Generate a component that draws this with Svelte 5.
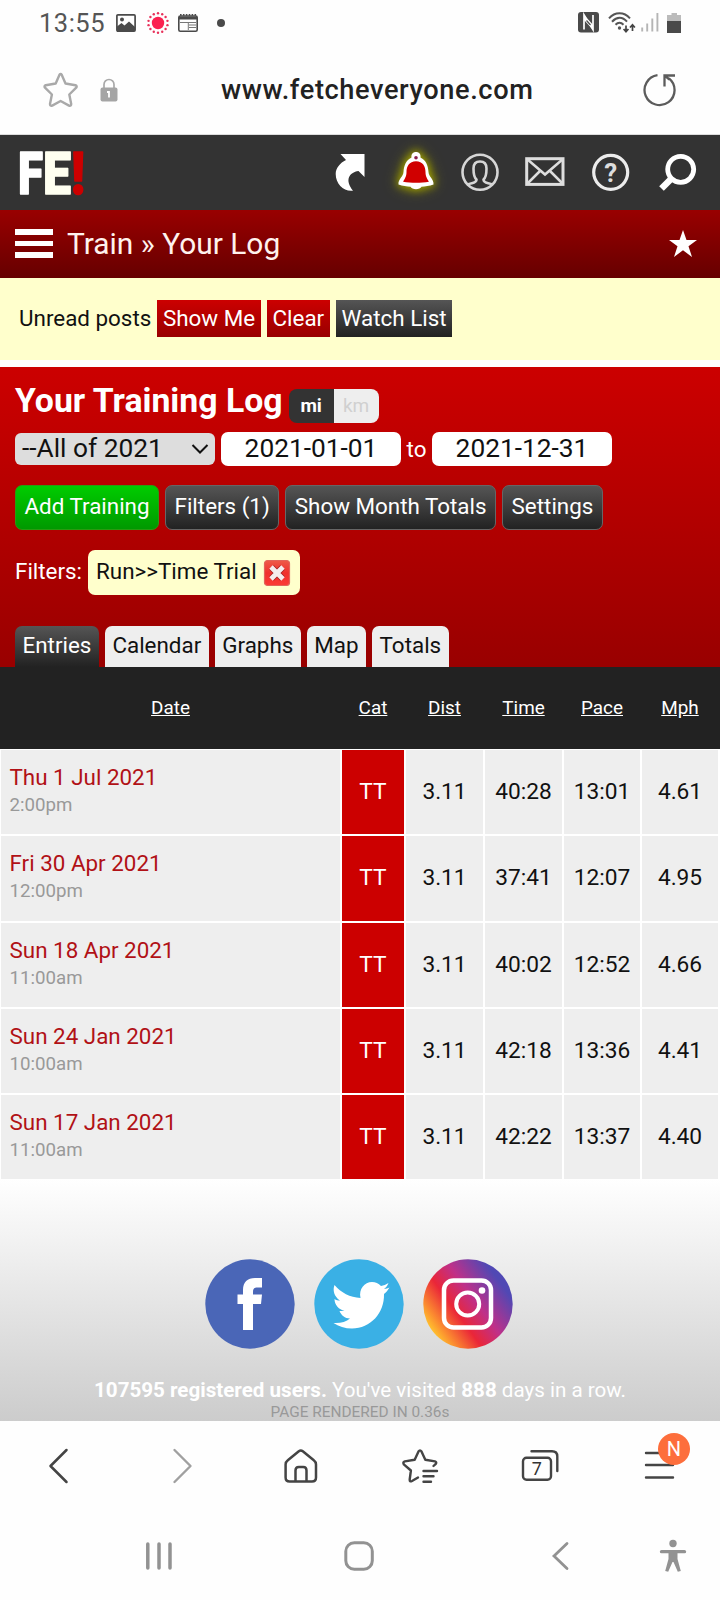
<script>
  const actions = ['Filters (1)', 'Show Month Totals', 'Settings'];
  const tabs = ['Calendar', 'Graphs', 'Map', 'Totals'];
  const columns = ['Date', 'Cat', 'Dist', 'Time', 'Pace', 'Mph'];

  const entries = [
    { date: 'Thu 1 Jul 2021', at: '2:00pm', cat: 'TT', dist: '3.11', time: '40:28', pace: '13:01', mph: '4.61' },
    { date: 'Fri 30 Apr 2021', at: '12:00pm', cat: 'TT', dist: '3.11', time: '37:41', pace: '12:07', mph: '4.95' },
    { date: 'Sun 18 Apr 2021', at: '11:00am', cat: 'TT', dist: '3.11', time: '40:02', pace: '12:52', mph: '4.66' },
    { date: 'Sun 24 Jan 2021', at: '10:00am', cat: 'TT', dist: '3.11', time: '42:18', pace: '13:36', mph: '4.41' },
    { date: 'Sun 17 Jan 2021', at: '11:00am', cat: 'TT', dist: '3.11', time: '42:22', pace: '13:37', mph: '4.40' }
  ];

  const sunDots = Array.from({ length: 14 }, (_, i) => {
    const angle = (i * 2 * Math.PI) / 14;
    return { x: 11 + 9.7 * Math.sin(angle), y: 11 - 9.7 * Math.cos(angle) };
  });
</script>

<div class="screen">
  <div class="status">
    <span class="clock">13:55</span>
    <svg class="photo" width="20" height="18" viewBox="0 0 20 18">
      <rect x="0.9" y="0.9" width="18.2" height="16.2" rx="1" fill="none" stroke="#4a4a4a" stroke-width="1.7" />
      <circle cx="6" cy="5.5" r="2" fill="#4a4a4a" />
      <path d="M1 17v-4.5l4.5-3.5 3 2.5L13 7.5l6 5.5v4z" fill="#4a4a4a" />
    </svg>
    <svg class="sun" width="22" height="22" viewBox="0 0 22 22">
      <circle cx="11" cy="11" r="6.2" fill="#fb2150" />
      {#each sunDots as dot}
        <circle cx={dot.x} cy={dot.y} r="1.2" fill="#e8305a" />
      {/each}
    </svg>
    <svg class="news" width="20" height="18" viewBox="0 0 20 18">
      <rect x="0.8" y="2" width="18.4" height="15.2" rx="1.5" fill="none" stroke="#4a4a4a" stroke-width="1.6" />
      <path d="M1 2.5h18v3H1z" fill="#4a4a4a" />
      <path d="M2 .9h16.5" stroke="#4a4a4a" stroke-width="1.8" stroke-dasharray="1.6 1.3" />
      <path d="M2 8.5h16M11 11h7M11 13.5h7" stroke="#777" stroke-width="1" />
      <path d="M10.3 8v8" stroke="#777" stroke-width="1" />
    </svg>
    <span class="more"></span>
    <svg class="nfc" width="22" height="21" viewBox="0 0 22 21">
      <rect x="0" y="0" width="21" height="20.5" rx="3" fill="#4a4a4a" />
      <path d="M6 17.5V2.8L15 17.7V3" fill="none" stroke="#fff" stroke-width="1.7" />
      <path d="M6 3v5l9 9.7v-5z" fill="#fff" />
      <path d="M8.5 8.5l4 4.5" stroke="#4a4a4a" stroke-width="1.2" />
    </svg>
    <svg class="wifi" width="28" height="22" viewBox="0 0 28 22">
      <g fill="none" stroke="#555" stroke-width="2">
        <path d="M1 6.3C7-.5 16-.5 22 6.3" />
        <path d="M4 9.7C9 4.5 14.5 4.5 19 9.7" />
        <path d="M7.5 12.7C10 10 13 10 15.5 12.7" />
      </g>
      <circle cx="11.5" cy="16" r="1.7" fill="#555" />
      <path d="M18 13.5v6M15.6 17l2.4 2.7 2.4-2.7M24.5 19v-6M22 15.5l2.5-2.7 2.4 2.7" fill="none" stroke="#444" stroke-width="1.7" />
    </svg>
    <svg class="signal" width="18" height="19" viewBox="0 0 18 19">
      <path d="M1.2 14.5V18.5M6.2 10.5V18.5M11.3 5.5V18.5M16.4 0V18.5" stroke="#b5b5b5" stroke-width="1.9" />
    </svg>
    <svg width="14" height="20" viewBox="0 0 14 20">
      <path d="M4.5 0h5.5v2h4v6H0V2h4.5z" fill="#bbb" />
      <path d="M0 8h14v12H0z" fill="#4a4a4a" />
    </svg>
  </div>

  <div class="address">
    <svg class="fav" width="38" height="38" viewBox="0 0 38 38">
      <path d="M17.5 3.7Q18.6 2 19.7 3.7L23.5 12.5L33.5 14.2Q35.5 15 34.2 16.7L27.3 23.5L29.2 33Q29.2 35.3 27 34.6L18.6 30L10.2 34.6Q8 35.3 8 33L9.9 23.5L3 16.7Q1.7 15 3.7 14.2L13.7 12.5Z" fill="none" stroke="#a9a9a9" stroke-width="2.4" stroke-linejoin="round" />
    </svg>
    <svg class="lock" width="18" height="24" viewBox="0 0 18 24">
      <path d="M4 10V6.5a5 5 0 0 1 10 0V10" fill="none" stroke="#a9a9a9" stroke-width="1.7" />
      <rect x="0.5" y="9.5" width="17" height="14" rx="2" fill="#a5a5a5" />
      <path d="M7 14h2v5.5" fill="none" stroke="#fff" stroke-width="1.8" />
    </svg>
    <span class="url">www.fetcheveryone.com</span>
    <svg class="reload" width="34" height="34" viewBox="0 0 34 34">
      <path d="M14.5 2.2A15 15 0 1 0 26 5.4M21.5 13.5V2.5h10.5M21.5 2.5l5 4" fill="none" stroke="#5c5c5c" stroke-width="2.3" />
    </svg>
  </div>

  <header class="site">
    <div class="logo">
      <svg width="25" height="75" viewBox="0 0 25 75"><text x="0" y="59" textLength="25" lengthAdjust="spacingAndGlyphs" fill="#fff" stroke="#fff">F</text></svg>
      <svg width="28" height="75" viewBox="0 0 28 75"><text x="0" y="59" textLength="28" lengthAdjust="spacingAndGlyphs" fill="#fffff0" stroke="#fffff0">E</text></svg>
      <svg width="15" height="75" viewBox="0 0 15 75"><text x="0" y="59" textLength="14" lengthAdjust="spacingAndGlyphs" fill="#c00" stroke="#c00">!</text></svg>
    </div>
    <nav class="tools">
      <svg width="65" height="75" viewBox="0 0 65 75">
        <path d="M22.5 19H46.5V42L40.5 36C31 37.5 26.5 45 35 55.7C26 57 17.7 49 17.7 39C17.7 33 22 28 28 25Z" fill="#fff" />
      </svg>
      <svg class="bell" width="65" height="75" viewBox="0 0 65 75">
        <path d="M33 17c3 0 5 2.2 4.5 5.5C43 25.5 45 30 45.5 37c.3 5 5.5 7 5 12.5-4 1.5-8.5 2-12 2.300-1.500 3.200-9.500 3.200-11 0-3.500-.3-8-.8-12-2.300-.5-5.500 4.700-7.500 5-12.500.5-7 2.500-11.500 8-14.500C28 19.200 30 17 33 17z" fill="#fff" />
        <path d="M33 26.3c6.800 0 9.500 5.200 9.500 10.700 0 4.500 1.700 6.500 3.400 9.700-8 1.500-17.800 1.500-25.800 0C21.800 43.500 23.500 41.500 23.500 37c0-5.500 2.700-10.700 9.500-10.700z" fill="#d00000" />
        <circle cx="33" cy="22.700" r="1.800" fill="#8a1f4c" />
      </svg>
      <svg width="65" height="75" viewBox="0 0 65 75">
        <g fill="none" stroke="#d6d6d6" stroke-width="2.6">
          <circle cx="32" cy="37.3" r="17.5" />
          <path d="M19.5 49.5C24 47.5 28.5 48.5 28.5 44.5C26 42.5 25.5 38 25.5 33.5C25.5 28.5 28 26.5 32 26.5S38.5 28.5 38.5 33.5C38.5 38 38 42.5 35.5 44.5C35.5 48.5 40 47.5 44.5 49.5" />
        </g>
      </svg>
      <svg width="65" height="75" viewBox="0 0 65 75">
        <g fill="none" stroke="#dedede">
          <rect x="13.7" y="23.7" width="36.3" height="25.7" stroke-width="3" />
          <path d="M14 24l18 15.5L50 24M14 49l13-13M50 49L37 36" stroke-width="2.5" />
        </g>
      </svg>
      <svg width="65" height="75" viewBox="0 0 65 75">
        <circle cx="32.7" cy="37.3" r="17" fill="none" stroke="#ececec" stroke-width="3.2" />
        <text x="32.7" y="46.5" text-anchor="middle" font-family="Roboto, sans-serif" font-weight="700" font-size="26" fill="#ddd">?</text>
      </svg>
      <svg width="65" height="75" viewBox="0 0 65 75">
        <path d="M28 44L18.5 53.5" stroke="#fff" stroke-width="6.5" />
        <circle cx="37.7" cy="34.3" r="13" fill="none" stroke="#fff" stroke-width="4.8" />
      </svg>
    </nav>
  </header>

  <div class="crumbs">
    <div class="burger"><i></i><i></i><i></i></div>
    <span class="trail">Train » Your Log</span>
    <svg width="30" height="30" viewBox="0 0 30 30">
      <path d="M15 1l3.500 10H29l-8.500 6.300L24 28l-9-6.700L6 28l3.500-10.700L1 11h10.500z" fill="#fff" />
    </svg>
  </div>

  <div class="unread">
    <span class="caption">Unread posts</span>
    <span class="flat red">Show Me</span>
    <span class="flat red">Clear</span>
    <span class="flat dark">Watch List</span>
  </div>

  <section class="log">
    <div class="title">
      <h1>Your Training Log</h1>
      <div class="units"><span class="on">mi</span><span>km</span></div>
    </div>
    <div class="range">
      <div class="select">
        <span>--All of 2021</span>
        <svg width="18" height="12" viewBox="0 0 18 12"><path d="M1.5 2L9 9.5 16.5 2" fill="none" stroke="#111" stroke-width="2" /></svg>
      </div>
      <div class="field">2021-01-01</div>
      <span class="to">to</span>
      <div class="field">2021-12-31</div>
    </div>
    <div class="actions">
      <span class="btn green">Add Training</span>
      {#each actions as label}
        <span class="btn">{label}</span>
      {/each}
    </div>
    <div class="filters">
      <span>Filters:</span>
      <div class="tag">
        <span>Run&gt;&gt;Time Trial</span>
        <svg width="28" height="28" viewBox="0 0 28 28">
          <defs>
            <linearGradient id="close" x1="0" y1="0" x2="0" y2="1">
              <stop offset="0" stop-color="#ee5a48" />
              <stop offset="0.5" stop-color="#f0302c" />
              <stop offset="1" stop-color="#fb3a34" />
            </linearGradient>
          </defs>
          <rect x="1.5" y="1.5" width="25" height="25" rx="3" fill="url(#close)" stroke="#e2645a" stroke-width="1.2" />
          <path d="M8.5 8.5l11 11M19.5 8.5l-11 11" stroke="#a82020" stroke-width="6.5" />
          <path d="M8 8l12 12M20 8L8 20" stroke="#f4ecec" stroke-width="4.8" />
        </svg>
      </div>
    </div>
    <div class="tabs">
      <span class="tab active">Entries</span>
      {#each tabs as label}
        <span class="tab">{label}</span>
      {/each}
    </div>
  </section>

  <div class="row head">
    {#each columns as column}
      <span>{column}</span>
    {/each}
  </div>
  <div class="rows">
    {#each entries as entry}
      <div class="row">
        <div class="when">
          <span class="date">{entry.date}</span>
          <span class="at">{entry.at}</span>
        </div>
        <div class="cell cat">{entry.cat}</div>
        <div class="cell">{entry.dist}</div>
        <div class="cell">{entry.time}</div>
        <div class="cell">{entry.pace}</div>
        <div class="cell">{entry.mph}</div>
      </div>
    {/each}
  </div>

  <footer>
    <div class="social">
      <svg width="90" height="90" viewBox="0 0 90 90">
        <circle cx="45" cy="45" r="44.7" fill="#4a66b7" />
        <path d="M38 71V45h-5.5v-9.5H38V31c0-8 4.5-12 12-12h7v9.5h-4.5c-3.500 0-4.500 1.500-4.500 4.500v2.500h9L56 45h-8v26z" fill="#fff" />
      </svg>
      <svg width="90" height="90" viewBox="0 0 90 90">
        <circle cx="45" cy="45" r="44.7" fill="#3ab0e5" />
        <path d="M20.5 26C27 33.5 36 38.5 46.5 39C44.5 30 50.5 23 58 23C61.5 23 64.5 24.5 67 27C69.5 26.5 72 25.5 74.5 24C73.5 27 71.5 29 70 30C72 30 74 29 75.5 28.5C74 31 72 33.5 70 35C70.5 54 56.5 69.5 38 69.5C31 69.5 24.5 67.5 19.5 64C26 64.5 32 63 36 59.5C31 59.5 27 56 25.5 52H30.5C25 50.5 20.5 46 20.5 40C22 41 24 41.5 26 41.5C20 37.5 18.5 31 20.5 26Z" fill="#fff" />
      </svg>
      <svg width="90" height="90" viewBox="0 0 90 90">
        <defs>
          <linearGradient id="insta" x1="0.08" y1="0.78" x2="0.88" y2="0.2">
            <stop offset="0" stop-color="#ffc22e" />
            <stop offset="0.12" stop-color="#fb8a30" />
            <stop offset="0.35" stop-color="#ea2638" />
            <stop offset="0.6" stop-color="#bf3089" />
            <stop offset="0.95" stop-color="#5048b4" />
          </linearGradient>
        </defs>
        <circle cx="45" cy="45" r="44.7" fill="url(#insta)" />
        <g fill="none" stroke="#fff">
          <rect x="21" y="21.5" width="47" height="47" rx="9.5" stroke-width="4.5" />
          <circle cx="44.7" cy="45" r="11.5" stroke-width="4" />
        </g>
        <circle cx="59" cy="31.5" r="3.3" fill="#fff" />
      </svg>
    </div>
    <p class="stats"><b>107595 registered users.</b> You've visited <b>888</b> days in a row.</p>
    <p class="rendered">PAGE RENDERED IN 0.36s</p>
  </footer>

  <nav class="browser">
    <svg viewBox="0 0 48 48"><path d="M30.5 8L14.5 24l16 16" fill="none" stroke="#444" stroke-width="2.5" stroke-linecap="round" stroke-linejoin="round" /></svg>
    <svg viewBox="0 0 48 48"><path d="M18.5 8l16 16-16 16" fill="none" stroke="#a0a0a0" stroke-width="2.4" stroke-linecap="round" stroke-linejoin="round" /></svg>
    <svg viewBox="0 0 48 48">
      <g transform="translate(0.8 0)" fill="none" stroke="#444" stroke-width="2.5" stroke-linejoin="round">
        <path d="M22 9.3Q24 7.8 26 9.3L37 18.3Q39.2 20 39.2 22.5V35.5Q39.2 39.5 35.2 39.5H12.8Q8.8 39.5 8.8 35.5V22.5Q8.8 20 11 18.3Z" />
        <path d="M18.7 39.5V28.5Q18.7 25 22 25H26.5Q29.7 25 29.7 28.5V39.5" />
      </g>
    </svg>
    <svg viewBox="0 0 48 48">
      <g fill="none" stroke="#444" stroke-width="2.4" stroke-linecap="round" stroke-linejoin="round">
        <path d="M22 35.5L16 39Q13.5 40.3 13.7 37.5L14.9 28.5L7.8 22.3Q6.5 20 8.800 19.400L18.700 17.800L22.500 9.500Q24 7.300 25.500 9.500L29.300 17.800L39 19.400Q41 20 39.800 21.800L37.500 24" />
        <path d="M27.5 29H41M27.5 34.3H37.5M27.5 39.7H35" />
      </g>
    </svg>
    <svg viewBox="0 0 48 48">
      <g fill="none" stroke="#444" stroke-width="2.4" stroke-linecap="round">
        <rect x="7" y="15.7" width="28" height="22" rx="3.5" />
        <path d="M15.5 9.3H36Q41.3 9.3 41.3 14.5V29" />
      </g>
      <text x="20.8" y="33" text-anchor="middle" font-family="Roboto, sans-serif" font-size="18" fill="#333">7</text>
    </svg>
    <svg viewBox="0 0 48 48">
      <path d="M10 11H37M10 23H37M10 35.5H37" stroke="#444" stroke-width="2.4" stroke-linecap="round" />
      <circle cx="38" cy="7" r="16" fill="#fd6e3c" />
      <text x="38" y="14.2" text-anchor="middle" font-family="Roboto, sans-serif" font-size="20" fill="#fff">N</text>
    </svg>
  </nav>

  <nav class="system">
    <svg class="recents" viewBox="0 0 32 32"><path d="M4.8 4v24M16 4v24M27 4v24" stroke="#929292" stroke-width="3.5" stroke-linecap="round" /></svg>
    <svg class="home" viewBox="0 0 32 32"><rect x="2.8" y="2.8" width="26.5" height="26.5" rx="8.5" fill="none" stroke="#929292" stroke-width="3" /></svg>
    <svg class="back" viewBox="0 0 32 32"><path d="M23 3.5L10 16l13 12.5" fill="none" stroke="#929292" stroke-width="2.8" stroke-linecap="round" /></svg>
    <svg class="person" viewBox="0 0 32 36">
      <circle cx="16" cy="5.5" r="3.7" fill="#929292" />
      <path d="M4.5 13.7H27.5" stroke="#929292" stroke-width="3.3" stroke-linecap="round" />
      <path d="M11.5 13h9v8l3.3 12-3 .8L16.5 24h-1l-4.3 9.8-3-.8 3.3-12z" fill="#929292" />
    </svg>
  </nav>
</div>

<style>
  :global(body) {
    margin: 0;
    background: #fff;
  }
  .screen {
    width: 720px;
    height: 1600px;
    overflow: hidden;
    font-family: Roboto, sans-serif;
    font-size: 22.4px;
    color: #111;
    background: #fefefe;
  }
  svg {
    display: block;
    flex: none;
  }
  .status {
    display: flex;
    align-items: center;
    box-sizing: border-box;
    height: 46px;
    padding: 0 39px 1px 39px;
  }
  .clock {
    width: 77px;
    font-size: 25.5px;
    line-height: 40px;
    letter-spacing: 0.5px;
    color: #555;
  }
  .sun {
    margin-left: 11px;
  }
  .news {
    margin-left: 9px;
  }
  .more {
    width: 8px;
    height: 8px;
    margin-left: 19px;
    border-radius: 50%;
    background: #4a4a4a;
  }
  .nfc {
    margin-left: auto;
  }
  .wifi {
    margin-left: 8px;
  }
  .signal {
    margin-left: 5px;
    margin-right: 8px;
  }
  .address {
    display: flex;
    align-items: center;
    box-sizing: border-box;
    height: 89px;
    padding: 0 43px 1px 42px;
    border-bottom: 1px solid #ddd;
  }
  .lock {
    margin-left: 20px;
  }
  .url {
    flex: 1;
    padding-left: 103px;
    font-size: 27.2px;
    font-weight: 500;
    line-height: 36px;
    letter-spacing: 0.6px;
    color: #222;
  }
  .site {
    display: flex;
    justify-content: space-between;
    height: 75px;
    padding: 0 12px 0 18px;
    background: #333;
  }
  .logo {
    display: flex;
    font-size: 60px;
    font-weight: 900;
  }
  .logo text {
    stroke-width: 1.5px;
    stroke-linejoin: round;
  }
  .tools {
    display: flex;
  }
  .bell {
    filter: drop-shadow(0 0 4px #a8a800) drop-shadow(0 0 6px #808000);
  }
  .crumbs {
    display: flex;
    align-items: center;
    height: 68px;
    padding: 0 22px 0 15px;
    background: linear-gradient(#900, #600);
  }
  .burger {
    display: flex;
    flex-direction: column;
    gap: 6px;
    width: 38px;
    margin-right: 14px;
    padding-bottom: 1px;
  }
  .burger i {
    height: 5.5px;
    background: #fff;
  }
  .trail {
    flex: 1;
    padding-bottom: 2px;
    font-size: 29.9px;
    color: #fff2ee;
  }
  .unread {
    display: flex;
    align-items: center;
    gap: 6px;
    box-sizing: border-box;
    height: 82px;
    padding: 0 19px 1px;
    font-size: 22.4px;
    background: #ffc;
  }
  .caption {
    padding-bottom: 1px;
  }
  .flat {
    padding: 0 5.7px;
    line-height: 37px;
    color: #fff;
  }
  .red {
    background: linear-gradient(#c00, #900);
  }
  .dark {
    background: linear-gradient(#555, #222);
  }
  .log {
    display: flex;
    flex-direction: column;
    box-sizing: border-box;
    height: 300px;
    margin-top: 7px;
    padding: 0 15px;
    color: #fff;
    background: linear-gradient(#c00, #900);
  }
  .title {
    display: flex;
    align-items: flex-start;
    gap: 6px;
    height: 65px;
  }
  h1 {
    margin: 0;
    padding-top: 14px;
    font-size: 33.8px;
    line-height: 40px;
  }
  .units {
    display: flex;
    margin-top: 22px;
    overflow: hidden;
    border-radius: 8px;
    font-size: 19px;
    line-height: 34px;
    text-align: center;
  }
  .units span {
    width: 45px;
    color: #d0d0d0;
    background: #eee;
  }
  .units .on {
    font-weight: 700;
    color: #fff;
    background: #333;
  }
  .range {
    display: flex;
    align-items: center;
    height: 34px;
    font-size: 26.3px;
    color: #111;
  }
  .select {
    display: flex;
    align-items: center;
    justify-content: space-between;
    box-sizing: border-box;
    width: 200px;
    height: 32px;
    margin-right: 6px;
    padding: 0 6px 2px 7px;
    border-radius: 6px;
    background: #ddd;
  }
  .select svg {
    margin-top: 2px;
  }
  .field {
    width: 180px;
    border-radius: 7px;
    line-height: 32px;
    padding-bottom: 2px;
    text-align: center;
    background: #fff;
  }
  .to {
    width: 31px;
    font-size: 22.4px;
    text-align: center;
    color: #fff;
  }
  .actions {
    display: flex;
    gap: 6px;
    margin-top: 19px;
  }
  .btn {
    padding: 0 8.5px 2px;
    border: 1px solid #666;
    border-radius: 7px;
    line-height: 41px;
    background: linear-gradient(#555, #222);
  }
  .green {
    border-color: #2a9a10;
    background: linear-gradient(#0c0, #090);
  }
  .filters {
    display: flex;
    gap: 6px;
    margin-top: 20px;
    line-height: 43px;
  }
  .tag {
    display: flex;
    align-items: center;
    gap: 6px;
    box-sizing: border-box;
    height: 45px;
    padding: 0 9px 0 8px;
    border-radius: 7px;
    color: #111;
    background: #ffc;
  }
  .tag span {
    padding-bottom: 2px;
  }
  .tabs {
    display: flex;
    gap: 6px;
    margin-top: auto;
  }
  .tab {
    height: 41px;
    padding: 0 7.5px;
    border-radius: 7px 7px 0 0;
    line-height: 38px;
    color: #111;
    background: #eee;
  }
  .active {
    color: #fff;
    background: linear-gradient(#555, #222);
  }
  .row {
    display: grid;
    grid-template-columns: 339px 62px 77px 77px 76px 76px;
    column-gap: 2px;
    padding-left: 1px;
  }
  .head {
    height: 82px;
    font-size: 18.9px;
    line-height: 82px;
    text-align: center;
    text-decoration: underline;
    color: #fff;
    background: #222;
  }
  .rows {
    display: grid;
    row-gap: 2px;
    padding-top: 1px;
    background: #fff;
  }
  .rows .row {
    height: 84.25px;
  }
  .when {
    display: flex;
    flex-direction: column;
    padding: 14px 0 0 8.5px;
    background: #eee;
  }
  .date {
    line-height: 27px;
    color: #b11116;
  }
  .at {
    font-size: 18.7px;
    line-height: 29px;
    color: #999;
  }
  .cell {
    font-size: 22.7px;
    line-height: 83.5px;
    text-align: center;
    background: #eee;
  }
  .cat {
    color: #fff;
    background: #c00;
  }
  footer {
    box-sizing: border-box;
    height: 241.5px;
    padding-top: 80px;
    text-align: center;
    background: linear-gradient(#fff, #ccc);
  }
  .social {
    display: flex;
    justify-content: center;
    gap: 19px;
    padding-right: 2px;
  }
  p {
    margin: 0;
  }
  .stats {
    padding-top: 28px;
    font-size: 20.6px;
    line-height: 26px;
    color: #fff;
  }
  .rendered {
    font-size: 15.4px;
    line-height: 18px;
    color: #999;
  }
  .browser {
    display: flex;
    align-items: center;
    justify-content: space-between;
    height: 90px;
    padding: 0 36px;
  }
  .browser svg {
    width: 48px;
    height: 48px;
    overflow: visible;
  }
  .system {
    display: flex;
    align-items: center;
    height: 90px;
  }
  .system svg {
    width: 32px;
    height: 32px;
  }
  .system .recents {
    margin-left: 142.5px;
  }
  .system .home {
    margin-left: 168.5px;
  }
  .system .back {
    margin-left: 169px;
  }
  .system .person {
    height: 36px;
    margin-left: 80.5px;
  }
</style>
